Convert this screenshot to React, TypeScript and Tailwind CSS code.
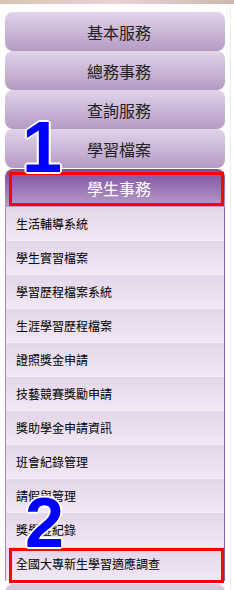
import React from 'react';

const topMenus = ['基本服務', '總務事務', '查詢服務', '學習檔案'];

const subItems = [
  '生活輔導系統',
  '學生實習檔案',
  '學習歷程檔案系統',
  '生涯學習歷程檔案',
  '證照獎金申請',
  '技藝競賽獎勵申請',
  '獎助學金申請資訊',
  '班會紀錄管理',
  '請假與管理',
  '獎學金紀錄',
  '全國大專新生學習適應調查',
];

const outline =
  '[text-shadow:2px_0_0_#fff,-2px_0_0_#fff,0_2px_0_#fff,0_-2px_0_#fff,1px_1px_0_#fff,-1px_-1px_0_#fff,1px_-1px_0_#fff,-1px_1px_0_#fff]';

export default function App() {
  return (
    <div className="relative w-[234px] h-[590px] overflow-hidden bg-white font-['Noto_Sans_CJK_TC','Liberation_Sans',sans-serif]">
      <div className="h-[4px] bg-linear-to-r from-[#d8c3b3] via-[#e9d3d6] to-[#cdb8ad]" />

      <div className="flex">
        <div className="ml-[5px] w-[220px] pt-[8px] flex flex-col">
          {topMenus.map(m => (
            <div
              key={m}
              className="h-[39px] rounded-[8px] bg-linear-to-b from-[#e2d3e8] to-[#b49bc5] flex items-center justify-center pl-[8px] text-[16px] text-[#222]"
            >
              {m}
            </div>
          ))}

          <div className="mt-px h-[38px] rounded-t-[8px] bg-linear-to-b from-[#7d4c9f] to-[#b89dcb] flex items-center justify-center pl-[8px] text-[16px] text-white">
            學生事務
          </div>

          <div className="border-l border-r border-l-[#a58bb8] border-r-[#8b5cab]">
            {subItems.map(s => (
              <div
                key={s}
                className="h-[34px] flex items-center pl-[10px] text-[12px] text-black bg-linear-to-b from-[#e3d6ea] to-[#f1e7f5] border-b border-b-[#f4ecf7]"
              >
                {s}
              </div>
            ))}
          </div>

          <div className="mt-[3px] h-[39px] rounded-[8px] bg-linear-to-b from-[#d8d0dc] to-[#b49bc5]" />
        </div>
        <div className="ml-[5px] w-px bg-[#ececec]" />
      </div>

      {/* annotations */}
      <div className="absolute left-[9px] top-[172px] w-[215px] h-[34px] border-[3px] border-[#ff0000]" />
      <div className="absolute left-[9px] top-[548px] w-[215px] h-[35px] border-[3px] border-[#ff0000]" />
      <div className={`absolute left-[22px] top-[111px] text-[72px] leading-none font-bold text-[#0000ff] font-['Liberation_Sans',sans-serif] ${outline}`}>
        1
      </div>
      <div className={`absolute left-[25px] top-[488px] text-[70px] leading-none font-bold text-[#0000ff] font-['Liberation_Sans',sans-serif] ${outline}`}>
        2
      </div>
    </div>
  );
}
